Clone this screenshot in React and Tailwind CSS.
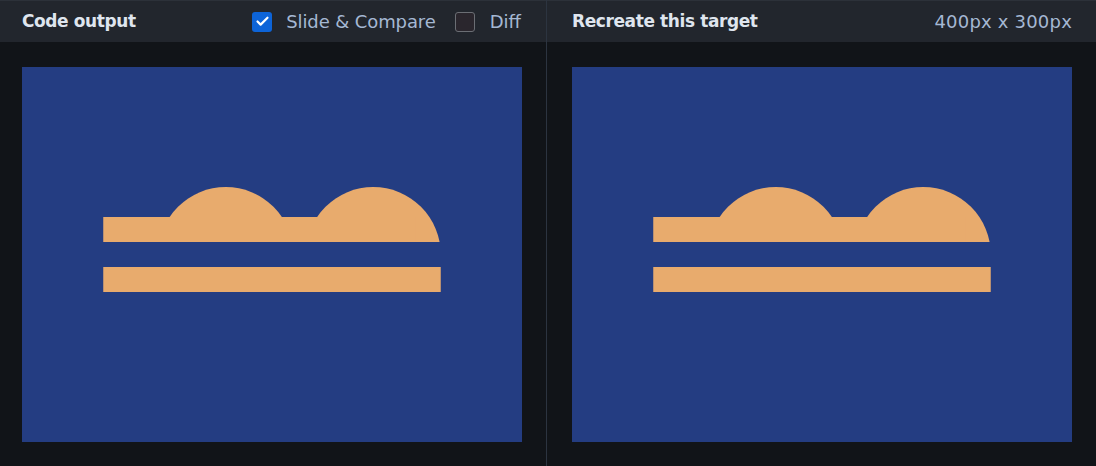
import { Check } from 'lucide-react';

function Target() {
  return (
    <div className="w-[500px] h-[375px] bg-[#243d82]">
      <svg width="500" height="375" viewBox="0 0 400 300">
        <defs>
          <clipPath id="above">
            <rect x="0" y="0" width="400" height="140" />
          </clipPath>
        </defs>
        <g clipPath="url(#above)" fill="#e8ab6d">
          <circle cx="163" cy="150" r="54" />
          <circle cx="281" cy="150" r="54" />
        </g>
        <rect x="65" y="120" width="250" height="20" fill="#e8ab6d" />
        <rect x="65" y="160" width="270" height="20" fill="#e8ab6d" />
      </svg>
    </div>
  );
}

export default function App() {
  return (
    <div
      className="w-[1096px] h-[466px] bg-[#111418] flex overflow-hidden"
      style={{ fontFamily: '"DejaVu Sans", "Noto Sans", sans-serif' }}
    >
      <div className="w-[546px] flex flex-col">
        <div className="h-[42px] bg-[#22262d] border-t border-[#2c3139] flex items-center pl-[22px] pr-[25px]">
          <h2 className="text-[17px] font-bold text-[#dfe5ee] tracking-[-0.4px]">Code output</h2>
          <div className="ml-auto flex items-center">
            <span className="w-5 h-5 rounded-[3px] bg-[#0d64d8] flex items-center justify-center">
              <Check size={15} strokeWidth={3.5} className="text-white" />
            </span>
            <span className="ml-[14px] text-[18px] text-[#a5b8d3] tracking-[-0.1px]">Slide &amp; Compare</span>
            <span className="ml-[19px] w-5 h-5 rounded-[3px] bg-[#2a262d] border border-[#6b6e74]" />
            <span className="ml-[15px] text-[18px] text-[#a5b8d3]">Diff</span>
          </div>
        </div>
        <div className="pl-[22px] pt-[25px]">
          <Target />
        </div>
      </div>
      <div className="w-px bg-[#2c3440]" />
      <div className="flex-1 flex flex-col">
        <div className="h-[42px] bg-[#22262d] border-t border-[#2c3139] flex items-center pl-[25px] pr-[24px]">
          <h2 className="text-[17px] font-bold text-[#dfe5ee] tracking-[-0.4px]">Recreate this target</h2>
          <span className="ml-auto text-[18px] text-[#a5b8d3] tracking-[0.2px]">400px x 300px</span>
        </div>
        <div className="pl-[25px] pt-[25px]">
          <Target />
        </div>
      </div>
    </div>
  );
}
